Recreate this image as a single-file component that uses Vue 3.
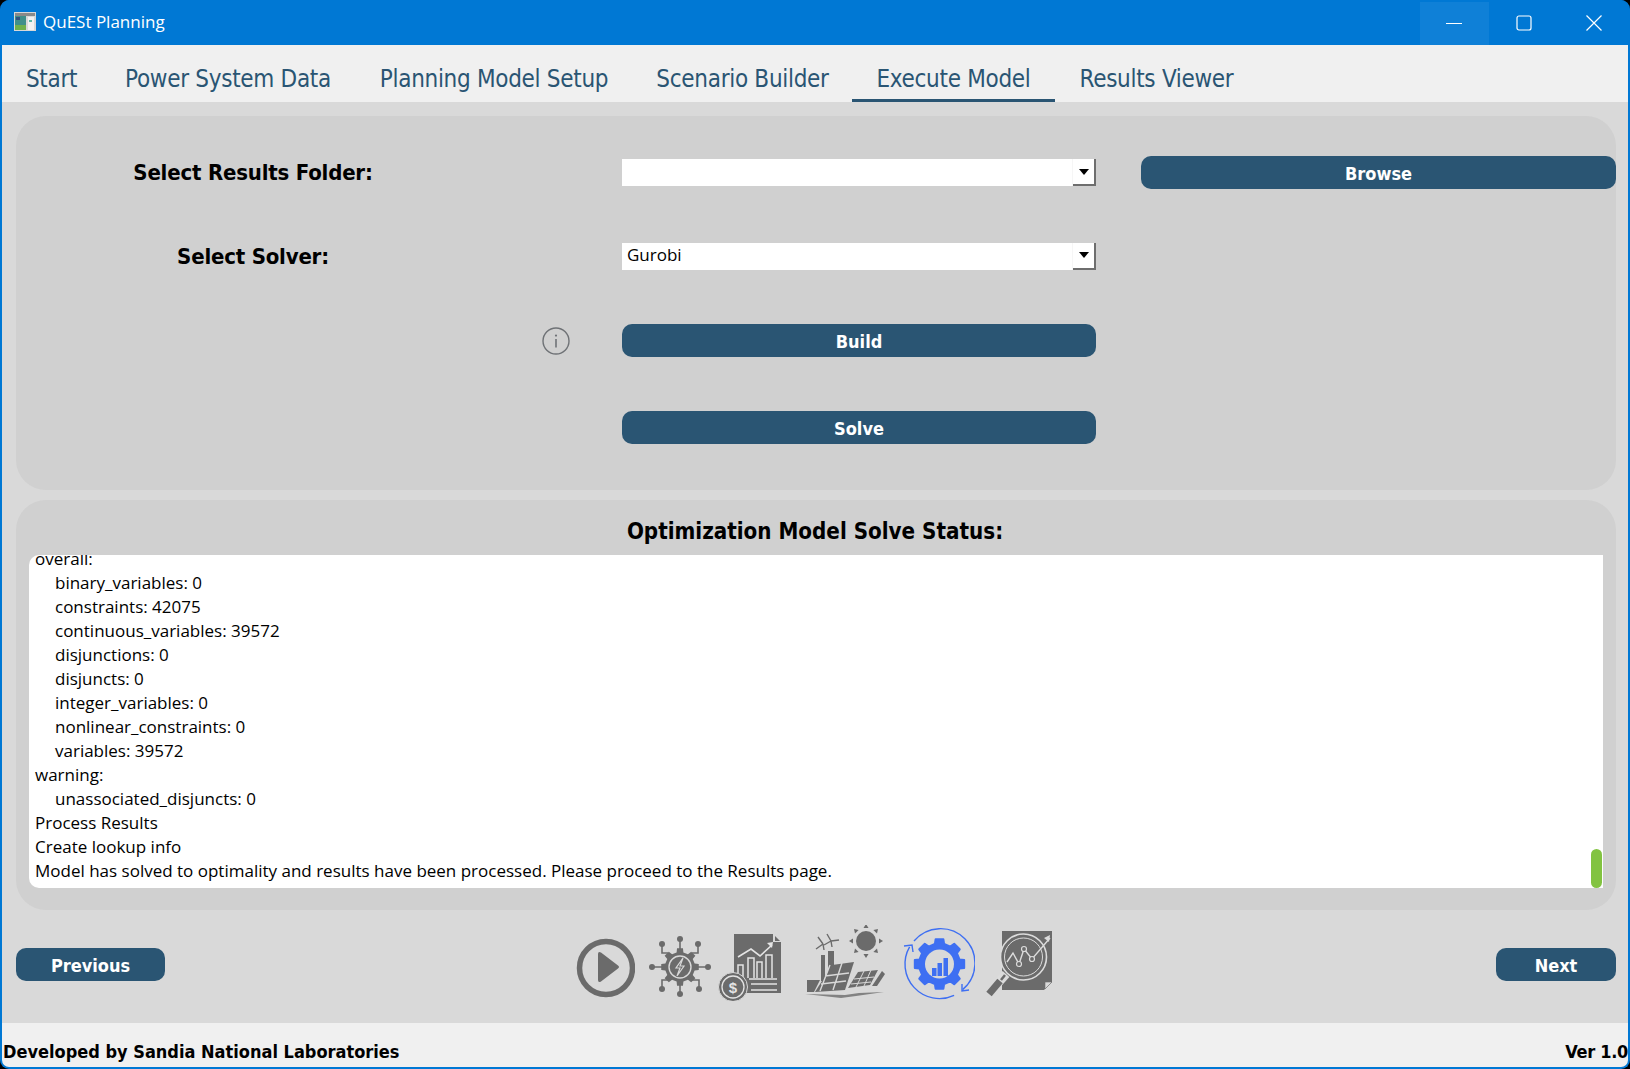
<script setup>
const tabs = [
  { label: 'Start', w: 99 },
  { label: 'Power System Data', w: 254 },
  { label: 'Planning Model Setup', w: 278 },
  { label: 'Scenario Builder', w: 219 },
  { label: 'Execute Model', w: 203, active: true },
  { label: 'Results Viewer', w: 203 }
]
const log = [
  ['overall:', 0],
  ['binary_variables: 0', 1],
  ['constraints: 42075', 1],
  ['continuous_variables: 39572', 1],
  ['disjunctions: 0', 1],
  ['disjuncts: 0', 1],
  ['integer_variables: 0', 1],
  ['nonlinear_constraints: 0', 1],
  ['variables: 39572', 1],
  ['warning:', 0],
  ['unassociated_disjuncts: 0', 1],
  ['Process Results', 0],
  ['Create lookup info', 0],
  ['Model has solved to optimality and results have been processed. Please proceed to the Results page.', 0]
]
function gear(cx, cy, ro, ri, n) {
  const pts = []
  const step = (Math.PI * 2) / n
  for (let i = 0; i < n; i++) {
    const a = i * step - Math.PI / 2
    const t = step * 0.2
    const b = step * 0.29
    const p = [[ri, a - b], [ro, a - t], [ro, a + t], [ri, a + b]]
    for (const [r, an] of p) {
      pts.push((cx + r * Math.cos(an)).toFixed(2) + ',' + (cy + r * Math.sin(an)).toFixed(2))
    }
  }
  return 'M' + pts.join('L') + 'Z'
}
const circuitGear = gear(680, 967, 19, 15, 8)
const blueGear = gear(939.5, 964, 25, 20.5, 8)
const sunRays = Array.from({ length: 8 }, (_, i) => {
  const a = (i * Math.PI) / 4
  const c = Math.cos(a), s = Math.sin(a)
  const p = (r, o) => (866 + r * c - o * s).toFixed(1) + ',' + (941 + r * s + o * c).toFixed(1)
  return p(17, 0) + ' ' + p(13, 2.5) + ' ' + p(13, -2.5)
})
</script>

<template>
  <div class="window">
    <header class="titlebar">
      <svg class="app-icon" viewBox="0 0 22 19">
        <rect width="22" height="19" fill="#d8d8d8" />
        <rect x="1" y="1" width="20" height="3" fill="#8a8a8a" />
        <rect x="1" y="4" width="11" height="14" fill="#3f8f8a" />
        <rect x="1" y="13" width="11" height="5" fill="#6fb04c" />
        <rect x="2" y="5" width="4" height="3" fill="#33507f" />
        <rect x="14" y="5" width="6" height="13" fill="#f2f2f2" />
        <rect x="15" y="8" width="3" height="2" fill="#5fb8a8" />
      </svg>
      <span class="title">QuESt Planning</span>
      <div class="controls">
        <div class="ctl ctl-hover">
          <svg width="16" height="16" viewBox="0 0 16 16"><path d="M0 8.5h16" stroke="#fff" fill="none" /></svg>
        </div>
        <div class="ctl ctl-max">
          <svg width="16" height="16" viewBox="0 0 16 16"><rect x="1" y="1" width="14" height="14" rx="2" stroke="#fff" fill="none" stroke-width="1.2" /></svg>
        </div>
        <div class="ctl ctl-close">
          <svg width="16" height="16" viewBox="0 0 16 16"><path d="M.5.5l15 15M15.5.5l-15 15" stroke="#fff" fill="none" stroke-width="1.2" /></svg>
        </div>
      </div>
    </header>

    <nav class="tabs">
      <div
        v-for="t in tabs"
        :key="t.label"
        class="tab"
        :class="{ active: t.active }"
        :style="{ width: t.w + 'px' }"
      >{{ t.label }}</div>
    </nav>

    <main class="main">
      <section class="panel form">
        <div class="label row1">Select Results Folder:</div>
        <div class="combo row1">
          <span class="combo-text"></span>
          <span class="combo-btn"><i class="arrow"></i></span>
        </div>
        <button class="btn browse row1">Browse</button>

        <div class="label row2">Select Solver:</div>
        <div class="combo row2">
          <span class="combo-text">Gurobi</span>
          <span class="combo-btn"><i class="arrow"></i></span>
        </div>

        <svg class="info row3" width="28" height="28" viewBox="0 0 28 28">
          <circle cx="14" cy="14" r="13" fill="none" stroke="#6f7276" stroke-width="1.4" />
          <circle cx="14" cy="8.6" r="1.1" fill="#6f7276" />
          <path d="M14 12v8.5" stroke="#6f7276" stroke-width="1.6" />
        </svg>
        <button class="btn wide row3">Build</button>
        <button class="btn wide row4">Solve</button>
      </section>

      <section class="panel status">
        <h2 class="status-title">Optimization Model Solve Status:</h2>
        <div class="log">
          <div v-for="(l, i) in log" :key="i" class="line" :class="{ indent: l[1] }">{{ l[0] }}</div>
          <div class="thumb"></div>
        </div>
      </section>

      <div class="bottom">
        <button class="btn nav prev">Previous</button>
        <div class="icons">
          <svg class="ic i-play" viewBox="575 925 60 76">
            <circle cx="606" cy="968" r="26.5" fill="none" stroke="#6b6b6b" stroke-width="5.5" />
            <path d="M598 954q0-3 3-1.5l17 13q2 1.5 0 3l-17 13q-3 1.500-3-1.500z" fill="#6b6b6b" />
          </svg>

          <svg class="ic i-circuit" viewBox="649 925 62 76">
            <g fill="none" stroke="#6b6b6b" stroke-width="1.6">
              <path d="M680 939v12M680 983v11M652 967h12M696 967h12" />
              <path d="M662 944v9h6M698 944v9h-6M662 989v-9h6M699 989v-9h-7" />
            </g>
            <g fill="#6b6b6b">
              <circle cx="680" cy="939" r="3" /><circle cx="680" cy="994" r="3" />
              <circle cx="652" cy="967" r="3" /><circle cx="708" cy="967" r="3" />
              <circle cx="662" cy="944" r="3" /><circle cx="698" cy="944" r="3" />
              <circle cx="662" cy="989" r="3" /><circle cx="699" cy="989" r="3" />
              <path :d="circuitGear" />
            </g>
            <circle cx="680" cy="967" r="11" fill="none" stroke="#d9d9d9" stroke-width="1.4" />
            <path d="M683 958l-7 10h4l-3 8 7-10h-4z" fill="none" stroke="#d9d9d9" stroke-width="1.2" />
          </svg>

          <svg class="ic i-report" viewBox="717 925 65 76">
            <path d="M734 934h39v8h8v51h-47z" fill="#6b6b6b" />
            <path d="M775 936l5 5h-5z" fill="#6b6b6b" />
            <path d="M738 957l13-8 9 7 12-11" fill="none" stroke="#e4e4e4" stroke-width="1.6" />
            <path d="M767 943l6-1-1 6z" fill="#e4e4e4" />
            <g fill="none" stroke="#e4e4e4" stroke-width="1.5">
              <path d="M738 978v-13h5v13M748 978v-20h6v20M757 978v-16h5v16M766 978v-23h6v23" />
              <path d="M749 979h28M751 984h26M751 990h26" />
            </g>
            <circle cx="733" cy="987" r="14.500" fill="#6b6b6b" stroke="#d9d9d9" stroke-width="1" />
            <circle cx="733" cy="987" r="11" fill="none" stroke="#e4e4e4" stroke-width="1.3" />
            <text x="733" y="992.500" class="dollar">$</text>
          </svg>

          <svg class="ic i-solar" viewBox="805 925 82 76">
            <circle cx="866" cy="941" r="10" fill="#6b6b6b" />
            <polygon v-for="(r, i) in sunRays" :key="i" :points="r" fill="#6b6b6b" />
            <rect x="821" y="955" width="4" height="26" fill="#6b6b6b" />
            <rect x="828" y="951" width="6" height="30" fill="#6b6b6b" />
            <g fill="none" stroke="#6b6b6b" stroke-width="1.4">
              <path d="M823 944l-5-7M823 944l-7 5M823 944l1 6M831 941l-4-7M831 941l-7 4M831 941l8-1M831 941l1 6" />
            </g>
            <path d="M807 980h13l-6 12h-7z" fill="#6b6b6b" />
            <path d="M815 992l17-27 22-3-9 28z" fill="#6b6b6b" />
            <g stroke="#d9d9d9" stroke-width="1.4" fill="none">
              <path d="M825 976l24-3M821 984l25-3M830 965l-10 26M842 963l-9 27" />
            </g>
            <path d="M848 988l10-16 20-2-8 15z" fill="#6b6b6b" />
            <path d="M872 986l10-15 3 3-8 12z" fill="#6b6b6b" />
            <g stroke="#d9d9d9" stroke-width="1" fill="none">
              <path d="M854 979l20-2M851 984l20-2M864 971l-8 16M871 970l-7 16" />
            </g>
            <path d="M805 994l40 1 14-2 25-1-28 4-15 2z" fill="#6b6b6b" opacity=".8" />
          </svg>

          <svg class="ic i-blue" viewBox="903 925 72 76">
            <path :d="blueGear" fill="#3e6ff2" stroke="#3e6ff2" stroke-width="2" stroke-linejoin="round" />
            <circle cx="939.500" cy="964" r="14.500" fill="#d9d9d9" />
            <rect x="932" y="968" width="4.500" height="8" fill="#3e6ff2" />
            <rect x="937.500" y="963" width="4.500" height="13" fill="#3e6ff2" />
            <rect x="943.500" y="958" width="4.500" height="18" fill="#3e6ff2" />
            <g fill="none" stroke="#3e6ff2" stroke-width="1.4">
              <path d="M914 941A34.500 34.500 0 1 1 962.600 989.600" />
              <path d="M962 984l0 7 7-1" />
              <path d="M954.100 995.300A34.500 34.500 0 0 1 909.600 946.800" />
              <path d="M904 946l8-1 1 7" />
            </g>
          </svg>

          <svg class="ic i-analysis" viewBox="983 925 72 76">
            <path d="M1002 931h50v51l-8 8h-42z" fill="#6b6b6b" />
            <path d="M1045 989v-7h7z" fill="#d9d9d9" stroke="#6b6b6b" stroke-width=".6" />
            <path d="M1006 974l-8 9" stroke="#dcdcdc" stroke-width="9" />
            <circle cx="1023.500" cy="957" r="23" fill="#6b6b6b" stroke="#dcdcdc" stroke-width="1.6" />
            <circle cx="1023.500" cy="957" r="19" fill="none" stroke="#dcdcdc" stroke-width="1" />
            <path d="M1007 962l6-9 6 11 5-15 8 10 18-21" fill="none" stroke="#dcdcdc" stroke-width="1.4" />
            <path d="M1050 935l-1 7-5-4z" fill="#dcdcdc" />
            <g fill="#6b6b6b" stroke="#dcdcdc" stroke-width="1.2">
              <circle cx="1019" cy="964" r="2.500" /><circle cx="1024" cy="949" r="2.500" /><circle cx="1032" cy="959" r="2.500" />
            </g>
            <path d="M1005 975l-4 5" stroke="#6b6b6b" stroke-width="2.500" />
            <path d="M1000 981l-11 13" stroke="#6b6b6b" stroke-width="7" />
          </svg>
        </div>
        <button class="btn nav next">Next</button>
      </div>
    </main>

    <footer class="footer">
      <span>Developed by Sandia National Laboratories</span>
      <span class="ver">Ver 1.0</span>
    </footer>
  </div>
</template>

<style>
html, body { margin: 0; background: #000; }
</style>

<style scoped>
.window {
  width: 1630px;
  height: 1069px;
  box-sizing: border-box;
  display: flex;
  flex-direction: column;
  background: #0078d4;
  border-radius: 9px;
  border: 2px solid #0078d4;
  border-top: 0;
  overflow: hidden;
}
.titlebar {
  height: 45px;
  flex: none;
  display: flex;
  align-items: center;
  padding-left: 12px;
  background: #0078d4;
  color: #fff;
}
.app-icon { width: 22px; height: 19px; margin-top: -2px; }
.title {
  margin-left: 7px;
  font: 17px "Open Sans", "Noto Sans", sans-serif;
  margin-top: -2px;
}
.controls { margin-left: auto; display: flex; align-self: stretch; }
.ctl { display: flex; align-items: center; justify-content: center; margin-top: 2px; padding-bottom: 2px; }
.ctl-hover { background: #0f80d7; width: 69px; }
.ctl-hover svg { margin-left: -1px; }
.ctl-max { width: 69px; }
.ctl-close { width: 70px; }
.ctl-close svg { margin-left: 2px; }
.tabs {
  height: 57px;
  flex: none;
  display: flex;
  background: #f0f0f0;
}
.tab {
  box-sizing: border-box;
  display: flex;
  align-items: center;
  justify-content: center;
  font: 24px "DejaVu Sans Condensed", "DejaVu Sans", sans-serif;
  font-stretch: condensed;
  letter-spacing: -0.3px;
  color: #2a5573;
  padding-top: 11px;
  white-space: nowrap;
}
.tab.active { box-shadow: inset 0 -3px 0 #2a5573; }
.main {
  flex: 1;
  min-height: 0;
  background: #d9d9d9;
  padding: 14px 12px 0 14px;
  display: flex;
  flex-direction: column;
  gap: 10px;
}
.panel { background: #d0d0d0; border-radius: 30px; }
.form {
  height: 374px;
  box-sizing: border-box;
  padding-top: 40px;
  display: grid;
  grid-template-columns: 474px 132px 474px 45px 475px;
  grid-template-rows: 83.500px 84.500px 87px 33px;
  align-items: start;
}
.row1 { grid-row: 1; }
.row2 { grid-row: 2; }
.row3 { grid-row: 3; }
.row4 { grid-row: 4; }
.label {
  grid-column: 1;
  height: 33px;
  display: flex;
  align-items: center;
  justify-content: center;
  font: bold 22px "DejaVu Sans Condensed", "DejaVu Sans", sans-serif;
  font-stretch: condensed;
  letter-spacing: -0.2px;
  color: #000;
}
.combo {
  grid-column: 3;
  margin-top: 3px;
  height: 27px;
  background: #fff;
  display: flex;
  justify-content: space-between;
}
.combo-text {
  padding-left: 5px;
  font: 17px/24px "Open Sans", "Noto Sans", sans-serif;
  color: #000;
}
.combo-btn {
  width: 24px;
  box-sizing: border-box;
  background: #fff;
  border-left: 1px solid #f6f6f6;
  box-shadow: inset -2px -2px 0 #6e6e6e;
  display: flex;
  align-items: center;
  justify-content: center;
}
.arrow {
  width: 0;
  height: 0;
  margin: 0 2px 2px 0;
  border-left: 5px solid transparent;
  border-right: 5px solid transparent;
  border-top: 6px solid #000;
}
.btn {
  border: 0;
  padding: 2px 0 0;
  height: 33px;
  border-radius: 10px;
  background: #2a5573;
  color: #fff;
  font: bold 18px "DejaVu Sans Condensed", "DejaVu Sans", sans-serif;
  font-stretch: condensed;
}
.browse { grid-column: 5; }
.wide { grid-column: 3; }
.info { grid-column: 2; justify-self: center; margin-top: 3px; }
.status {
  height: 410px;
  box-sizing: border-box;
  padding: 0 13px 22px;
  display: flex;
  flex-direction: column;
}
.status-title {
  margin: 0;
  height: 55px;
  box-sizing: border-box;
  padding-top: 15px;
  padding-right: 2px;
  text-align: center;
  font: bold 22.200px/32px "DejaVu Sans Condensed", "DejaVu Sans", sans-serif;
  font-stretch: condensed;
  color: #000;
}
.log {
  flex: 1;
  min-height: 0;
  position: relative;
  background: #fff;
  border-radius: 10px 0 0 10px;
  overflow: hidden;
  display: flex;
  flex-direction: column;
  justify-content: flex-end;
  padding: 0 0 5px 6px;
}
.line {
  flex: none;
  height: 24px;
  font: 17px/24px "Open Sans", "Noto Sans", sans-serif;
  color: #000;
  white-space: nowrap;
}
.line.indent { padding-left: 20px; }
.thumb {
  position: absolute;
  right: 1px;
  bottom: 0;
  width: 11px;
  height: 39px;
  border-radius: 6px;
  background: #82c341;
}
.bottom {
  display: grid;
  grid-template-columns: 149px 1fr 120px;
  height: 76px;
  margin-top: 5px;
  align-items: center;
}
.nav { margin-top: 3px; }
.icons { display: flex; margin-left: 410px; }
.ic { height: 76px; flex: none; }
.i-play { width: 60px; margin-right: 14px; }
.i-circuit { width: 62px; margin-right: 6px; }
.i-report { width: 65px; margin-right: 23px; }
.i-solar { width: 82px; margin-right: 16px; }
.i-blue { width: 72px; margin-right: 8px; }
.i-analysis { width: 72px; }
.dollar {
  font: bold 15px "Liberation Sans", sans-serif;
  fill: #e4e4e4;
  text-anchor: middle;
}
.footer {
  height: 44px;
  flex: none;
  display: flex;
  justify-content: space-between;
  align-items: center;
  padding: 12px 0 0 1px;
  box-sizing: border-box;
  background: #f0f0f0;
  font: bold 18px "DejaVu Sans Condensed", "DejaVu Sans", sans-serif;
  font-stretch: condensed;
  color: #000;
}
.ver { letter-spacing: -0.3px; }
</style>
